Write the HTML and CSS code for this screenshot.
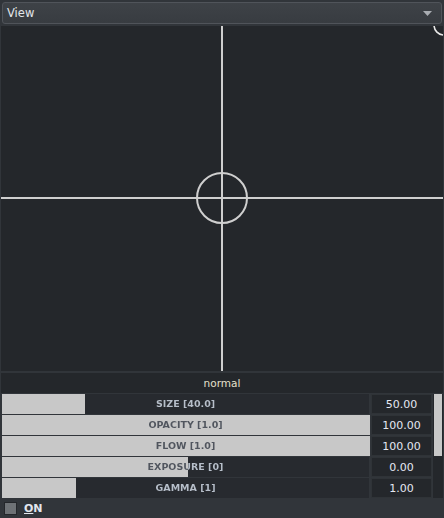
FILE: index.html
```html
<!DOCTYPE html>
<html>
<head>
<meta charset="utf-8">
<link rel="stylesheet" href="styles.css">
</head>
<body>
<div class="combo">
  <span class="combo-text">View</span>
  <svg class="combo-arrow" width="9" height="5" viewBox="0 0 9 5"><path d="M0 0H9L4.5 5Z" fill="#a9adb2"/></svg>
</div>
<div class="canvas">
  <svg class="view" width="442" height="345" viewBox="0 0 442 345">
    <line x1="221" y1="0" x2="221" y2="345" stroke="#cfcfcf" stroke-width="2"/>
    <line x1="0" y1="172" x2="442" y2="172" stroke="#cfcfcf" stroke-width="2"/>
    <circle cx="221" cy="172" r="25" fill="none" stroke="#cfcfcf" stroke-width="2"/>
    <circle cx="443" cy="-1" r="10" fill="none" stroke="#e8e8e8" stroke-width="1.6"/>
  </svg>
</div>
<div class="mode">normal</div>
<div class="params">
  <div class="rows">
    <div class="row">
      <div class="slider" style="--fill:83px"><div class="fill"></div><span class="label">SIZE [40.0]</span></div>
      <div class="value">50.00</div>
    </div>
    <div class="row">
      <div class="slider" style="--fill:368px"><div class="fill"></div><span class="label">OPACITY [1.0]</span></div>
      <div class="value">100.00</div>
    </div>
    <div class="row">
      <div class="slider" style="--fill:368px"><div class="fill"></div><span class="label">FLOW [1.0]</span></div>
      <div class="value">100.00</div>
    </div>
    <div class="row">
      <div class="slider" style="--fill:186px"><div class="fill"></div><span class="label">EXPOSURE [0]</span></div>
      <div class="value">0.00</div>
    </div>
    <div class="row">
      <div class="slider" style="--fill:74px"><div class="fill"></div><span class="label">GAMMA [1]</span></div>
      <div class="value">1.00</div>
    </div>
  </div>
  <div class="scroll"><div class="thumb"></div></div>
</div>
<div class="footer">
  <span class="check"></span>
  <span class="on"><u>O</u>N</span>
</div>
</body>
</html>
```
FILE: styles.css
```css
* { box-sizing: border-box; }
html, body {
  margin: 0;
  padding: 0;
}
body {
  width: 444px;
  height: 518px;
  background: #31353a;
  font-family: "DejaVu Sans", sans-serif;
  overflow: hidden;
}
.combo {
  margin: 2px 2px 0 2px;
  height: 22px;
  border: 1px solid #50545a;
  border-radius: 3px;
  background: linear-gradient(#3e4247, #383c41);
  display: flex;
  align-items: center;
  justify-content: space-between;
  padding: 0 9px 0 4px;
}
.combo-text {
  font-size: 11.5px;
  color: #e2e6ea;
}
.combo-arrow { display: block; }
.canvas {
  margin: 2px 1px 0 1px;
  height: 345px;
  background: #24272b;
}
.view { display: block; }
.mode {
  margin: 2px 1px 0 1px;
  height: 20px;
  background: #24272b;
  color: #e4e0cc;
  font-size: 10.5px;
  display: flex;
  align-items: center;
  justify-content: center;
}
.params {
  display: flex;
  gap: 1px;
  padding: 1px 1px 0 2px;
}
.rows {
  flex: 1;
  display: flex;
  flex-direction: column;
  gap: 1px;
}
.row {
  display: flex;
  gap: 2px;
  height: 20px;
}
.slider {
  flex: 1;
  position: relative;
  background: #272a2f;
  display: flex;
  align-items: center;
  justify-content: center;
}
.fill {
  position: absolute;
  left: 0;
  top: 0;
  bottom: 0;
  width: var(--fill);
  background: #c8c8c8;
}
.label {
  position: relative;
  flex: 1;
  height: 20px;
  line-height: 20px;
  text-align: center;
  font-size: 9.5px;
  font-weight: bold;
  white-space: nowrap;
  color: transparent;
  background: linear-gradient(90deg, #50555e var(--fill), #b7bfca var(--fill));
  -webkit-background-clip: text;
  background-clip: text;
}
.value {
  width: 61px;
  background: #24272b;
  border: 1px solid #2f3337;
  color: #e4e8f2;
  font-size: 11px;
  display: flex;
  align-items: center;
  justify-content: center;
}
.scroll {
  width: 10px;
  background: #24272b;
  padding: 0 1px;
}
.thumb {
  height: 62px;
  background: #c8c8c8;
}
.footer {
  height: 20px;
  display: flex;
  align-items: center;
  gap: 7px;
  padding: 0 0 0 4px;
}
.check {
  width: 13px;
  height: 13px;
  background: #6e7276;
  border: 1px solid #24272b;
}
.on {
  font-size: 11px;
  font-weight: bold;
  color: #e2e6ee;
}
.on u { text-decoration-thickness: 1px; }
```
